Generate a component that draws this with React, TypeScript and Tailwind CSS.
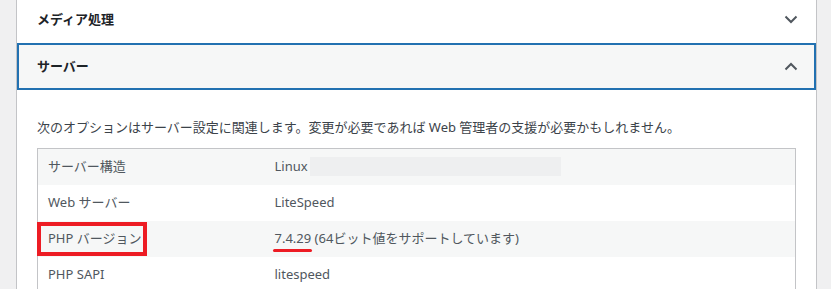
const font = { fontFamily: '"Noto Sans", "Noto Sans CJK JP", sans-serif' };

function Chevron({ up }: { up?: boolean }) {
  return (
    <svg width="14" height="9" viewBox="0 0 14 9" className="shrink-0">
      <polyline
        points={up ? "1.5,7.5 7,2 12.5,7.5" : "1.5,1.5 7,7 12.5,1.5"}
        fill="none"
        stroke="#50575e"
        strokeWidth="2"
      />
    </svg>
  );
}

const rows: { label: React.ReactNode; value: React.ReactNode }[] = [
  {
    label: "サーバー構造",
    value: (
      <span className="flex items-center">
        Linux
        <span className="ml-[2px] inline-block h-[19px] w-[251px] bg-[#eeeff0]" />
      </span>
    ),
  },
  { label: "Web サーバー", value: "LiteSpeed" },
  {
    label: (
      <span className="-ml-[11px] inline-flex h-[34px] w-[110px] items-center border-4 border-[#ed1c24] pl-[7px]">
        PHP バージョン
      </span>
    ),
    value: (
      <span>
        <span className="relative">
          7.4.29
          <span className="absolute -bottom-[5px] -left-[2px] h-[3px] w-[39px] rounded-full bg-[#ed1c24]" />
        </span>{" "}
        (64ビット値をサポートしています)
      </span>
    ),
  },
  { label: "PHP SAPI", value: "litespeed" },
];

export default function App() {
  return (
    <div className="flex h-[289px] w-[831px] overflow-hidden bg-[#f0f0f1]" style={font}>
      <div className="w-[16px] shrink-0" />
      <div className="w-[801px] shrink-0 border-x border-[#c3c4c7] bg-white">
        <div className="flex h-[43px] items-center justify-between pb-[4px] pl-[20px] pr-[18px]">
          <span className="text-[13px] font-semibold text-[#1d2327]">メディア処理</span>
          <Chevron />
        </div>
        <div className="flex h-[47px] items-center justify-between border-2 border-[#2271b1] bg-[#f6f7f7] pl-[18px] pr-[16px]">
          <span className="text-[13px] font-semibold text-[#1d2327]">サーバー</span>
          <Chevron up />
        </div>
        <div className="px-[20px] pt-[28px]">
          <p className="text-[13px] leading-[18px] text-[#3c434a]">
            次のオプションはサーバー設定に関連します。変更が必要であれば Web 管理者の支援が必要かもしれません。
          </p>
          <table className="mt-[12px] w-[759px] border-collapse border border-[#c3c4c7] text-[13px] text-[#50575e]">
            <tbody>
              {rows.map((r, i) => (
                <tr key={i} className={i % 2 === 0 ? "h-[36px] bg-[#f6f7f7]" : "h-[36px] bg-white"}>
                  <td className="w-[227px] pl-[10px]">{r.label}</td>
                  <td className="pl-[10px]">{r.value}</td>
                </tr>
              ))}
            </tbody>
          </table>
        </div>
      </div>
    </div>
  );
}
